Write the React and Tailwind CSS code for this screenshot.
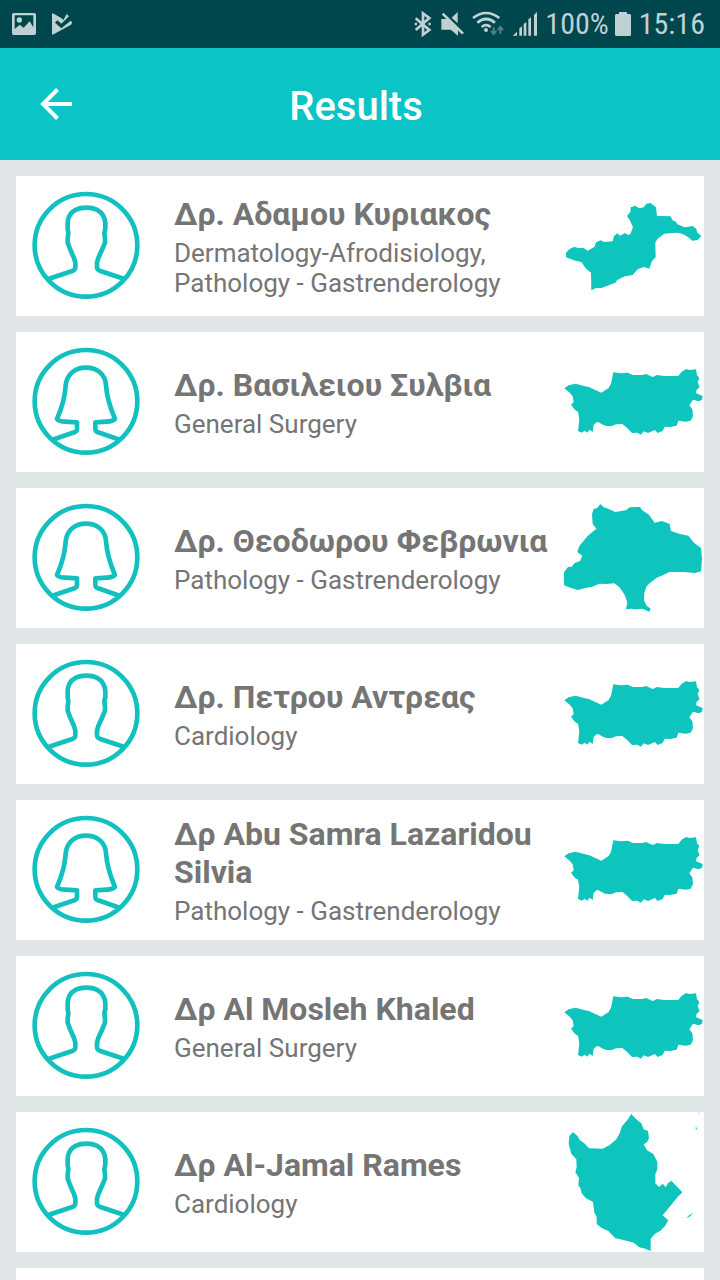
/**
 * Doctor search results screen
 * Status bar + app bar + list of doctor cards with their district
 */

const MAPS = {
  kerynia: {
    viewBox: '24 0 420 420',
    d: 'M30 230 L40 220 L55 212 L68 217 L82 215 L95 224 L108 217 L116 212 L120 199 L134 193 L144 198 L170 196 L174 180 L184 172 L192 179 L207 171 L217 177 L223 174 L231 154 L221 132 L213 120 L223 108 L224 94 L238 89 L249 97 L263 94 L271 83 L284 81 L300 94 L303 120 L344 121 L349 132 L360 138 L364 145 L386 154 L410 150 L421 158 L424 170 L436 180 L425 192 L409 194 Q385 170 360 170 L325 173 L304 189 L298 200 L299 244 L288 255 L280 278 L263 273 L245 280 L230 297 L207 301 L184 312 L178 320 L154 329 L137 336 L120 336 L106 343 L105 290 L90 278 L77 259 L54 253 L30 244 Z',
  },
  nicosia: {
    viewBox: '24 0 420 420',
    d: 'M25 169 L38 160 L58 155 L100 166 L136 182 L158 168 L165 155 L172 121 L194 124 L216 122 L230 129 L260 129 L270 126 L290 135 L303 129 L325 132 L367 132 L377 119 L390 111 L401 114 L420 112 L423 130 L430 138 L425 151 L431 166 L422 173 L420 184 L440 192 L438 203 L428 208 L411 203 L400 220 L409 232 L411 252 L404 266 L389 269 L367 266 L362 281 L342 285 L326 284 L320 297 L304 303 L297 294 L276 303 L264 298 L254 308 L244 302 L228 303 L213 287 L199 276 L180 277 L166 283 L147 281 L124 269 L113 278 L110 300 L101 293 L94 302 L86 296 L77 302 L66 297 L70 261 L66 239 L57 234 L45 218 L53 211 L50 193 L41 182 Z',
  },
  larnaca: {
    viewBox: '24 0 420 420',
    d: 'M108 78 L113 63 L124 60 L133 48 L142 57 L156 62 L178 72 L210 67 L221 58 L252 57 L259 67 L279 80 L296 104 L318 99 L341 108 L345 129 L372 138 L397 143 L414 164 L435 180 L438 213 L435 250 L417 255 L382 252 L340 252 L320 262 L302 269 L283 284 L272 294 L265 315 L264 337 L272 353 L284 362 L280 371 L259 362 L239 364 L226 362 L210 364 L214 343 L205 319 L190 297 L175 286 L150 288 L130 287 L107 297 L90 299 L66 306 L45 300 L24 292 L24 253 L36 237 L47 236 L56 225 L72 219 L79 203 L64 192 L70 174 L95 144 L121 122 L110 108 Z',
  },
  paphos: {
    viewBox: '24 24 420 420',
    d: 'M226 30 L239 44 L256 58 L263 76 L276 81 L279 103 L273 115 L263 121 L273 139 L292 150 L304 173 L304 196 L298 210 L298 238 L309 249 L320 239 L329 250 L336 238 L346 230 L379 265 L365 279 L343 306 L320 334 L337 349 L327 366 L313 380 L297 389 L284 404 L284 441 L268 434 L250 430 L233 416 L206 409 L178 403 L157 381 L137 372 L122 360 L122 340 L115 325 L111 294 L90 283 L77 268 L73 252 L67 245 L69 222 L58 204 L62 190 L61 166 L46 149 L38 120 L40 96 L51 84 L65 97 L72 109 L85 118 L99 133 L140 134 L161 123 L181 106 L191 88 L198 67 L214 48 Z M420 68 L425 78 L418 73 Z M427 24 L430 24 L429 27 Z M391 343 L400 333 L413 327 L399 339 Z',
  },
};

const DOCTORS = [
  { name: 'Δρ. Αδαμου Κυριακος', specialty: 'Dermatology-Afrodisiology, Pathology - Gastrenderology', gender: 'male', district: 'kerynia' },
  { name: 'Δρ. Βασιλειου Συλβια', specialty: 'General Surgery', gender: 'female', district: 'nicosia' },
  { name: 'Δρ. Θεοδωρου Φεβρωνια', specialty: 'Pathology - Gastrenderology', gender: 'female', district: 'larnaca' },
  { name: 'Δρ. Πετρου Αντρεας', specialty: 'Cardiology', gender: 'male', district: 'nicosia' },
  { name: 'Δρ Abu Samra Lazaridou Silvia', specialty: 'Pathology - Gastrenderology', gender: 'female', district: 'nicosia' },
  { name: 'Δρ Al Mosleh Khaled', specialty: 'General Surgery', gender: 'male', district: 'nicosia' },
  { name: 'Δρ Al-Jamal Rames', specialty: 'Cardiology', gender: 'male', district: 'paphos' },
];

function Avatar({ gender }) {
  return (
    <svg viewBox="0 0 420 420" className="size-[140px] shrink-0" fill="none" stroke="#12c0c0" strokeWidth="14" strokeLinejoin="round" aria-hidden="true">
      <circle cx="210" cy="208" r="154" />
      {gender === 'male' ? (
        <path d="M99 308 L171 284 Q178 281 178 274 V260 L174 246 L162 219 L155 200 V188 L157 172 L155 158 V139 Q156 128 160 120 Q173 95 211 95 Q249 95 262 120 Q267 129 268 142 V158 L265 172 L267 188 V200 L259 219 L247 246 L243 260 V274 Q243 281 251 284 L323 308" />
      ) : (
        <path d="M107 324 L177 300 Q183 297 183 290 V271 L147 269 Q130 269 123 261 C136 231 147 198 149 160 C153 126 177 107 210 107 C243 107 268 126 270 160 C273 198 284 231 297 261 Q290 268 273 269 L238 271 V290 Q238 297 244 300 L313 324" />
      )}
    </svg>
  );
}

function DistrictMap({ district }) {
  const map = MAPS[district];
  return (
    <svg viewBox={map.viewBox} className="size-[140px] shrink-0" fill="#0dc5bd" aria-hidden="true">
      <path d={map.d} />
    </svg>
  );
}

function DoctorCard({ doctor }) {
  return (
    <li className="flex min-h-[140px] shrink-0 items-center bg-white">
      <Avatar gender={doctor.gender} />
      <div className="flex min-w-0 flex-1 flex-col gap-[5px] pl-[18px]">
        <h2 className="text-[32px] leading-[38px] font-bold">{doctor.name}</h2>
        <p className="text-[26px] leading-[30px]">{doctor.specialty}</p>
      </div>
      <DistrictMap district={doctor.district} />
    </li>
  );
}

function StatusBar() {
  return (
    <div className="flex h-12 shrink-0 items-center justify-between bg-[#00464d] pr-[15px] pl-3 text-[#bfd1d3]">
      <div className="flex items-center gap-3.5">
        {/* Screenshot saved */}
        <svg viewBox="33 33 78 72" className="h-6 w-[26px] -ml-px" fill="currentColor" aria-hidden="true">
          <path fillRule="evenodd" d="M41 36h61q6 0 6 6v54q0 6-6 6H41q-5 0-5-6V42q0-6 5-6zM44 43v41l15-13 12 9 18-19 11 18V43zM58 49a8 8 0 1 1 0 16 8 8 0 0 1 0-16z" />
        </svg>
        {/* Play protect */}
        <svg viewBox="150 33 72 72" className="size-6" fill="currentColor" aria-hidden="true">
          <path d="M153 40q0-5 5-2l24 14 5 5 10-18 7 7-23 22-12-10-7 7 19 17 28-23 3 3q3 4-2 9l-52 29q-5 3-5-3z" />
        </svg>
      </div>
      <div className="flex items-center gap-2">
        {/* Bluetooth */}
        <svg viewBox="27 30 54 78" className="h-[26px] w-[18px]" fill="none" stroke="currentColor" strokeWidth="8" aria-hidden="true">
          <path d="M32 52L73 87 54 101V37L73 51 32 87" />
          <path d="M29 69h7M70 69h7" />
        </svg>
        {/* Muted */}
        <svg viewBox="108 30 72 78" className="h-[26px] w-6" fill="currentColor" aria-hidden="true">
          <path d="M112 54h18l32 31v19L140 86h-28zM143 50l18-17v34z" />
          <path d="M116 38l61 60" stroke="currentColor" strokeWidth="8" />
        </svg>
        {/* Wi-Fi */}
        <svg viewBox="210 30 96 78" className="h-[26px] w-8" fill="none" stroke="currentColor" strokeWidth="8" aria-hidden="true">
          <path d="M213 51Q252 21 292 51M226 65Q252 43 279 65M239 78Q252 67 266 78" />
          <circle cx="252" cy="87" r="6" fill="currentColor" stroke="none" />
          <path d="M275 79v20m-8-9l8 9 8-9M295 98V78m-8 9l8-9 8 9" stroke="#4d8086" strokeWidth="6" />
        </svg>
        {/* Signal */}
        <svg viewBox="318 30 75 78" className="h-[26px] w-[25px]" fill="currentColor" aria-hidden="true">
          <path d="M320 104l13-12v12zM340 104V82l8-6v28zM353 104V69l8-6v41zM367 104V55l8-6v55zM384 104V41l9-8v71z" />
        </svg>
        <span className="font-['Roboto_Condensed','Roboto',sans-serif] text-[30px] leading-8">100%</span>
        <svg viewBox="0 0 16 24" className="-ml-0.5 h-6 w-4" fill="currentColor" aria-hidden="true">
          <path d="M4 2V0h8v2h3l1 1v20l-1 1H1l-1-1V3l1-1z" />
        </svg>
        <span className="font-['Roboto_Condensed','Roboto',sans-serif] text-[30px] leading-8">15:16</span>
      </div>
    </div>
  );
}

function AppBar() {
  return (
    <header className="grid h-28 shrink-0 grid-cols-[104px_1fr_112px] items-center bg-[#0bc4c6] text-white">
      <button type="button" aria-label="Back" className="flex h-full items-center justify-end pr-8">
        <svg viewBox="0 0 32 32" className="size-8" fill="none" stroke="currentColor" strokeWidth="4" aria-hidden="true">
          <path d="M32 16H3M17.500 1.500L3 16l14.500 14.500" />
        </svg>
      </button>
      <h1 className="pt-1.5 text-center text-[40px] leading-[48px] font-medium">Results</h1>
    </header>
  );
}

export default function App() {
  return (
    <div className="flex h-screen flex-col overflow-hidden bg-[#e0e5e7] font-['Roboto',sans-serif] text-[#757575]">
      <StatusBar />
      <AppBar />
      <main className="min-h-0 flex-1 overflow-y-auto [scrollbar-width:none]">
        <ul className="flex flex-col gap-4 p-4">
          {DOCTORS.map((doctor) => (
            <DoctorCard key={doctor.name} doctor={doctor} />
          ))}
          <li className="min-h-[140px] shrink-0 bg-white" />
        </ul>
      </main>
    </div>
  );
}
